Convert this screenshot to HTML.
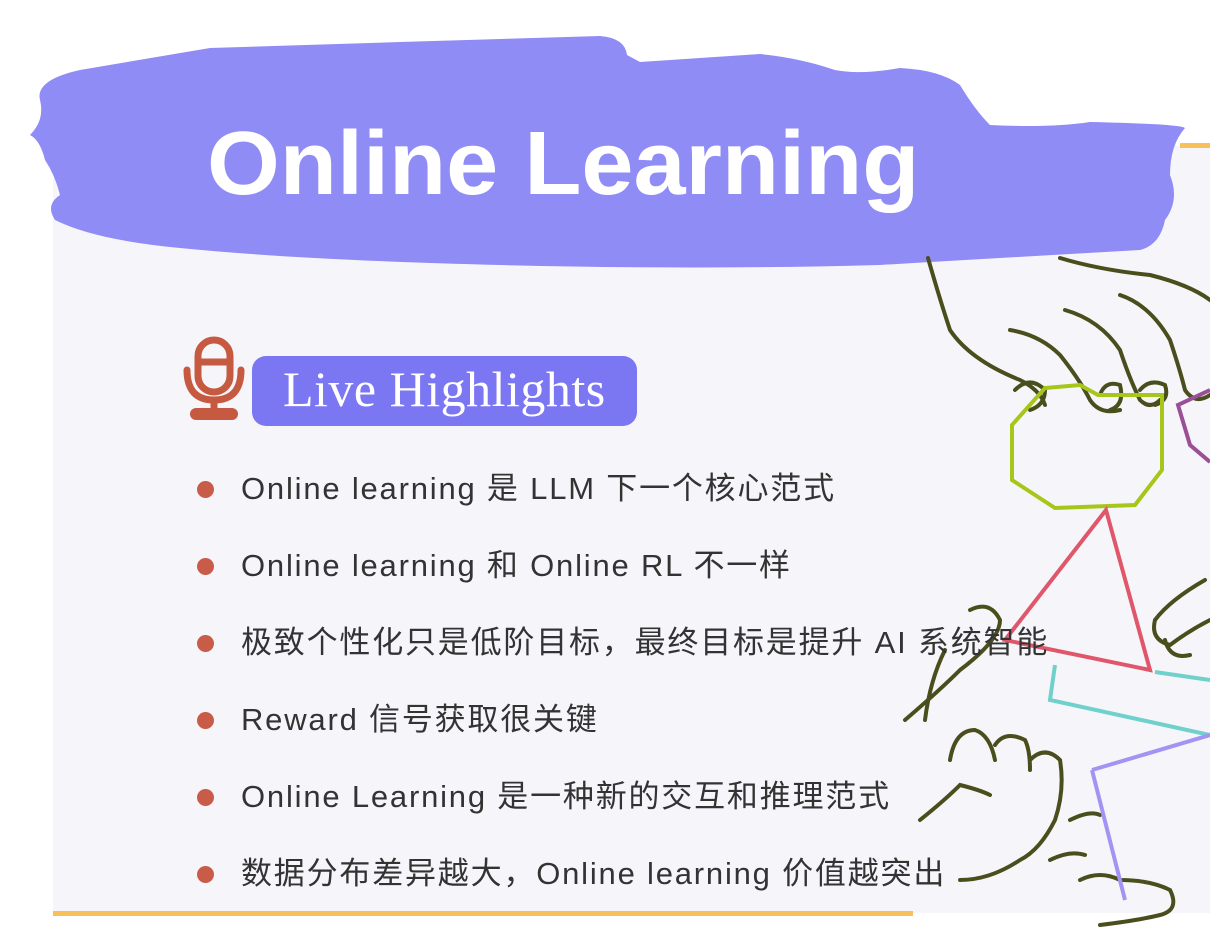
<!DOCTYPE html>
<html><head><meta charset="utf-8"><style>
html,body{margin:0;padding:0;width:1210px;height:930px;overflow:hidden;background:#fff;position:relative;font-family:"Liberation Sans","Noto Sans CJK SC",sans-serif}
.panel{position:absolute;left:53px;top:146px;width:1157px;height:767px;background:#f6f6fa}
.bottomline{position:absolute;left:53px;top:911px;width:860px;height:5px;background:#f7c05a}
.topline{position:absolute;left:1180px;top:143px;width:30px;height:5px;background:#f7c05a}
svg{position:absolute;left:0;top:0}
.title{position:absolute;left:207px;top:114px;font-size:90px;font-weight:bold;color:#fff;letter-spacing:0;line-height:100px;transform:scaleX(1.04);transform-origin:left}
.badge{position:absolute;left:252px;top:356px;width:385px;height:70px;background:#7b76f2;border-radius:14px;color:#fff;font-family:"Liberation Serif",serif;font-size:50px;line-height:66px;text-indent:31px;letter-spacing:0.5px;white-space:nowrap}
ul{position:absolute;left:195px;top:466px;margin:0;padding:0;list-style:none}
li{position:relative;height:77px;padding-left:46px;font-size:31px;color:#333;line-height:46px;letter-spacing:1.8px;white-space:nowrap}
li:before{content:"";position:absolute;left:2px;top:15px;width:17px;height:17px;border-radius:50%;background:#c95c48}
</style></head><body>
<div class="panel"></div>
<div class="topline"></div>
<div class="bottomline"></div>
<svg width="1210" height="930" viewBox="0 0 1210 930">
<path d="M80 70 L210 48 L400 42 L600 36 Q625 38 627 55 L640 62 Q700 58 760 54 Q800 58 835 70 Q860 75 900 68 Q940 70 960 85 Q975 110 990 125 Q1050 128 1090 122 Q1180 124 1185 128 Q1170 145 1170 175 Q1180 200 1165 220 Q1160 245 1140 250 Q1000 258 880 265 Q700 270 500 265 Q300 260 180 248 Q95 240 55 220 Q45 205 60 195 Q55 175 45 160 Q40 140 30 135 Q45 120 40 100 Q35 80 80 70 Z" fill="#8f8cf6"/>
<g fill="none" stroke="#4a4e1c" stroke-width="4" stroke-linecap="round">
<path d="M928 258 Q940 300 950 330 Q970 360 1020 380 Q1040 390 1045 405"/>
<path d="M1060 258 Q1100 270 1150 275 Q1190 285 1210 300"/>
<path d="M1010 330 Q1040 335 1060 355 Q1080 380 1090 400 Q1100 415 1120 410"/>
<path d="M1065 310 Q1100 320 1120 350 Q1130 380 1140 400 Q1150 410 1160 400"/>
<path d="M1120 295 Q1150 305 1170 340 Q1180 370 1185 390 Q1195 405 1210 395"/>
<path d="M1015 390 Q1030 375 1045 390 Q1045 405 1030 410"/>
<path d="M1100 395 Q1105 380 1120 385 Q1125 405 1110 410"/>
<path d="M1140 390 Q1150 378 1165 385 Q1170 400 1155 405"/>
<path d="M1205 580 Q1170 600 1155 620 Q1150 640 1170 645 Q1190 630 1210 620"/>
<path d="M1165 640 Q1170 660 1190 655"/>
<path d="M905 720 Q940 690 960 670 Q1000 640 1000 620 Q990 600 970 610"/>
<path d="M945 650 Q930 680 925 720"/>
<path d="M950 760 Q955 730 975 730 Q990 735 995 760 M995 745 Q1005 730 1025 740 Q1030 750 1030 770 M1030 760 Q1045 745 1060 760 Q1065 790 1055 820 Q1040 850 1020 860 Q990 880 960 880"/>
<path d="M920 820 Q945 800 960 785 Q980 790 990 795"/>
<path d="M1070 820 Q1090 810 1100 815"/>
<path d="M1080 880 Q1100 870 1120 880 Q1150 880 1170 890 Q1180 910 1160 915 Q1140 920 1100 925"/>
<path d="M1050 860 Q1070 850 1085 855"/>
</g>
<path d="M1045 388 L1080 385 L1098 395 L1162 395 L1162 470 L1135 505 L1055 508 L1012 480 L1012 425 Z" fill="none" stroke="#a6c71a" stroke-width="4"/>
<path d="M1106 510 L1150 670 L1005 640 Z" fill="none" stroke="#e0566b" stroke-width="4"/>
<path d="M1055 665 L1050 700 L1210 735 M1155 672 L1210 680" fill="none" stroke="#6fd0cc" stroke-width="4"/>
<path d="M1092 770 L1210 735 M1092 770 L1125 900" fill="none" stroke="#a394f3" stroke-width="4"/>
<path d="M1210 390 L1178 405 L1190 445 L1210 462" fill="none" stroke="#9a4f96" stroke-width="4"/>
<g fill="none" stroke="#c65a41" stroke-width="7" stroke-linecap="round">
<rect x="198" y="340" width="32" height="52" rx="16"/>
<path d="M198 362 H230"/>
<path d="M187 370 Q187 400 214 400 Q241 400 241 370"/>
<path d="M214 400 V412"/>
</g>
<rect x="190" y="408" width="48" height="12" rx="6" fill="#c65a41"/>
</svg>
<div class="title">Online Learning</div>
<div class="badge">Live Highlights</div>
<ul>
<li>Online learning 是 LLM 下一个核心范式</li>
<li>Online learning 和 Online RL 不一样</li>
<li>极致个性化只是低阶目标，最终目标是提升 AI 系统智能</li>
<li>Reward 信号获取很关键</li>
<li>Online Learning 是一种新的交互和推理范式</li>
<li>数据分布差异越大，Online learning 价值越突出</li>
</ul>
</body></html>
